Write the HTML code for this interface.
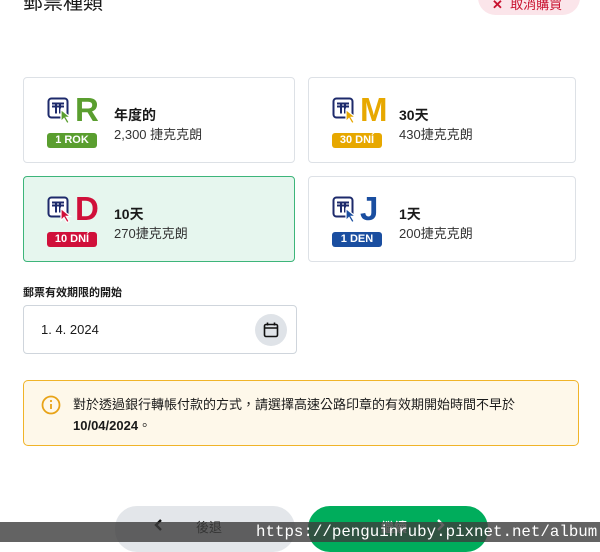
<!DOCTYPE html>
<html><head><meta charset="utf-8"><style>
*{box-sizing:border-box;margin:0;padding:0}
body{width:600px;height:542px;overflow:hidden;background:#fff;font-family:"Liberation Sans","Noto Sans CJK TC",sans-serif;color:#1a1a1a;position:relative}
.abs{position:absolute}
.card{position:absolute;border:1px solid #dde1e6;border-radius:4px;background:#fff}
.card.sel{background:#e6f6ee;border-color:#3db57a}
.ic{position:absolute;left:23px;top:19px}
.let{position:absolute;left:51px;top:16px;font-size:33px;font-weight:bold;line-height:32px}
.badge{position:absolute;left:23px;top:55px;width:50px;height:15px;border-radius:3px;color:#fff;font-size:11px;font-weight:bold;text-align:center;line-height:15px}
.t1{position:absolute;left:90px;top:27px;font-size:14px;font-weight:bold}
.t2{position:absolute;left:90px;top:46px;font-size:13px;color:#333}
</style></head><body>
<div class="abs" style="left:23px;top:-14px;font-size:20px">郵票種類</div>
<div class="abs" style="left:478px;top:-20px;width:102px;height:35px;border-radius:18px;background:#fbe5ea;color:#c8102e;font-size:13px;padding:14px 0 0 14px"><b>✕</b>&nbsp; 取消購買</div>

<svg width="0" height="0" style="position:absolute"><defs>
<g id="tk"><rect x="1.5" y="1.5" width="19" height="19" rx="3" fill="#fff" stroke="#1d2a6b" stroke-width="2"/><path d="M5 6.5h12M5 9.5h12M9 6.5v10M13 6.5v10" stroke="#1d2a6b" stroke-width="2" fill="none"/></g>
</defs></svg>

<div class="card" style="left:23px;top:77px;width:272px;height:86px">
<svg class="ic" width="28" height="28"><use href="#tk"/><path d="M14 12.5l0 12 3-3 3 5 2.2-1.2-3-5 4.2 0z" fill="#5a9e2f" stroke="#fff" stroke-width="1.2"/></svg>
<div class="let" style="color:#5a9e2f">R</div><div class="badge" style="background:#5a9e2f">1 ROK</div>
<div class="t1">年度的</div><div class="t2">2,300 捷克克朗</div></div>

<div class="card" style="left:308px;top:77px;width:268px;height:86px">
<svg class="ic" width="28" height="28"><use href="#tk"/><path d="M14 12.5l0 12 3-3 3 5 2.2-1.2-3-5 4.2 0z" fill="#e7a800" stroke="#fff" stroke-width="1.2"/></svg>
<div class="let" style="color:#e7a800">M</div><div class="badge" style="background:#e7a800">30 DNÍ</div>
<div class="t1">30天</div><div class="t2">430捷克克朗</div></div>

<div class="card sel" style="left:23px;top:176px;width:272px;height:86px">
<svg class="ic" width="28" height="28"><use href="#tk"/><path d="M14 12.5l0 12 3-3 3 5 2.2-1.2-3-5 4.2 0z" fill="#d0103a" stroke="#fff" stroke-width="1.2"/></svg>
<div class="let" style="color:#d0103a">D</div><div class="badge" style="background:#d0103a">10 DNÍ</div>
<div class="t1">10天</div><div class="t2">270捷克克朗</div></div>

<div class="card" style="left:308px;top:176px;width:268px;height:86px">
<svg class="ic" width="28" height="28"><use href="#tk"/><path d="M14 12.5l0 12 3-3 3 5 2.2-1.2-3-5 4.2 0z" fill="#1a4ea0" stroke="#fff" stroke-width="1.2"/></svg>
<div class="let" style="color:#1a4ea0">J</div><div class="badge" style="background:#1a4ea0">1 DEN</div>
<div class="t1">1天</div><div class="t2">200捷克克朗</div></div>

<div class="abs" style="left:23px;top:284px;font-size:11px;font-weight:bold">郵票有效期限的開始</div>
<div class="abs" style="left:23px;top:305px;width:274px;height:49px;border:1px solid #cfd5dc;border-radius:4px">
<div class="abs" style="left:17px;top:16px;font-size:13px">1. 4. 2024</div>
<div class="abs" style="left:231px;top:8px;width:32px;height:32px;border-radius:50%;background:#dfe3e8">
<svg width="32" height="32"><rect x="9.5" y="10.5" width="13" height="12" rx="1.5" fill="none" stroke="#111" stroke-width="1.6"/><path d="M9.5 14h13M12.5 8.5v3M19.5 8.5v3" stroke="#111" stroke-width="1.6"/></svg></div></div>

<div class="abs" style="left:23px;top:380px;width:556px;height:66px;border:1px solid #f0b429;border-radius:5px;background:#fef8ea">
<svg class="abs" style="left:16px;top:13px" width="22" height="22"><circle cx="11" cy="11" r="8.5" fill="none" stroke="#e8a317" stroke-width="1.8"/><path d="M11 10v5" stroke="#e8a317" stroke-width="1.8"/><circle cx="11" cy="7" r="1.1" fill="#e8a317"/></svg>
<div class="abs" style="left:49px;top:13px;font-size:13px;line-height:21px">對於透過銀行轉帳付款的方式，請選擇高速公路印章的有效期開始時間不早於<br><b>10/04/2024</b>。</div></div>

<div class="abs" style="left:115px;top:506px;width:180px;height:46px;border-radius:22px;background:#e3e6ea;font-size:13px">
<svg class="abs" style="left:38px;top:12px" width="12" height="14"><path d="M8 2L3 7l5 5" fill="none" stroke="#111" stroke-width="2.4"/></svg>
<span class="abs" style="left:81px;top:11px">後退</span></div>
<div class="abs" style="left:308px;top:506px;width:180px;height:46px;border-radius:22px;background:#00ad5c;color:#fff;font-size:13px"><span class="abs" style="left:73px;top:11px;font-weight:bold">繼續</span>
<svg class="abs" style="left:126px;top:12px" width="12" height="14"><path d="M4 2l5 5-5 5" fill="none" stroke="#fff" stroke-width="2.4"/></svg></div>

<div class="abs" style="left:0;top:522px;width:600px;height:20px;background:rgba(60,60,60,0.8)"></div>
<div class="abs" style="left:256px;top:523px;font-family:'Liberation Mono',monospace;font-size:15.8px;color:#fff;white-space:nowrap">https://penguinruby.pixnet.net/album</div>
</body></html>
